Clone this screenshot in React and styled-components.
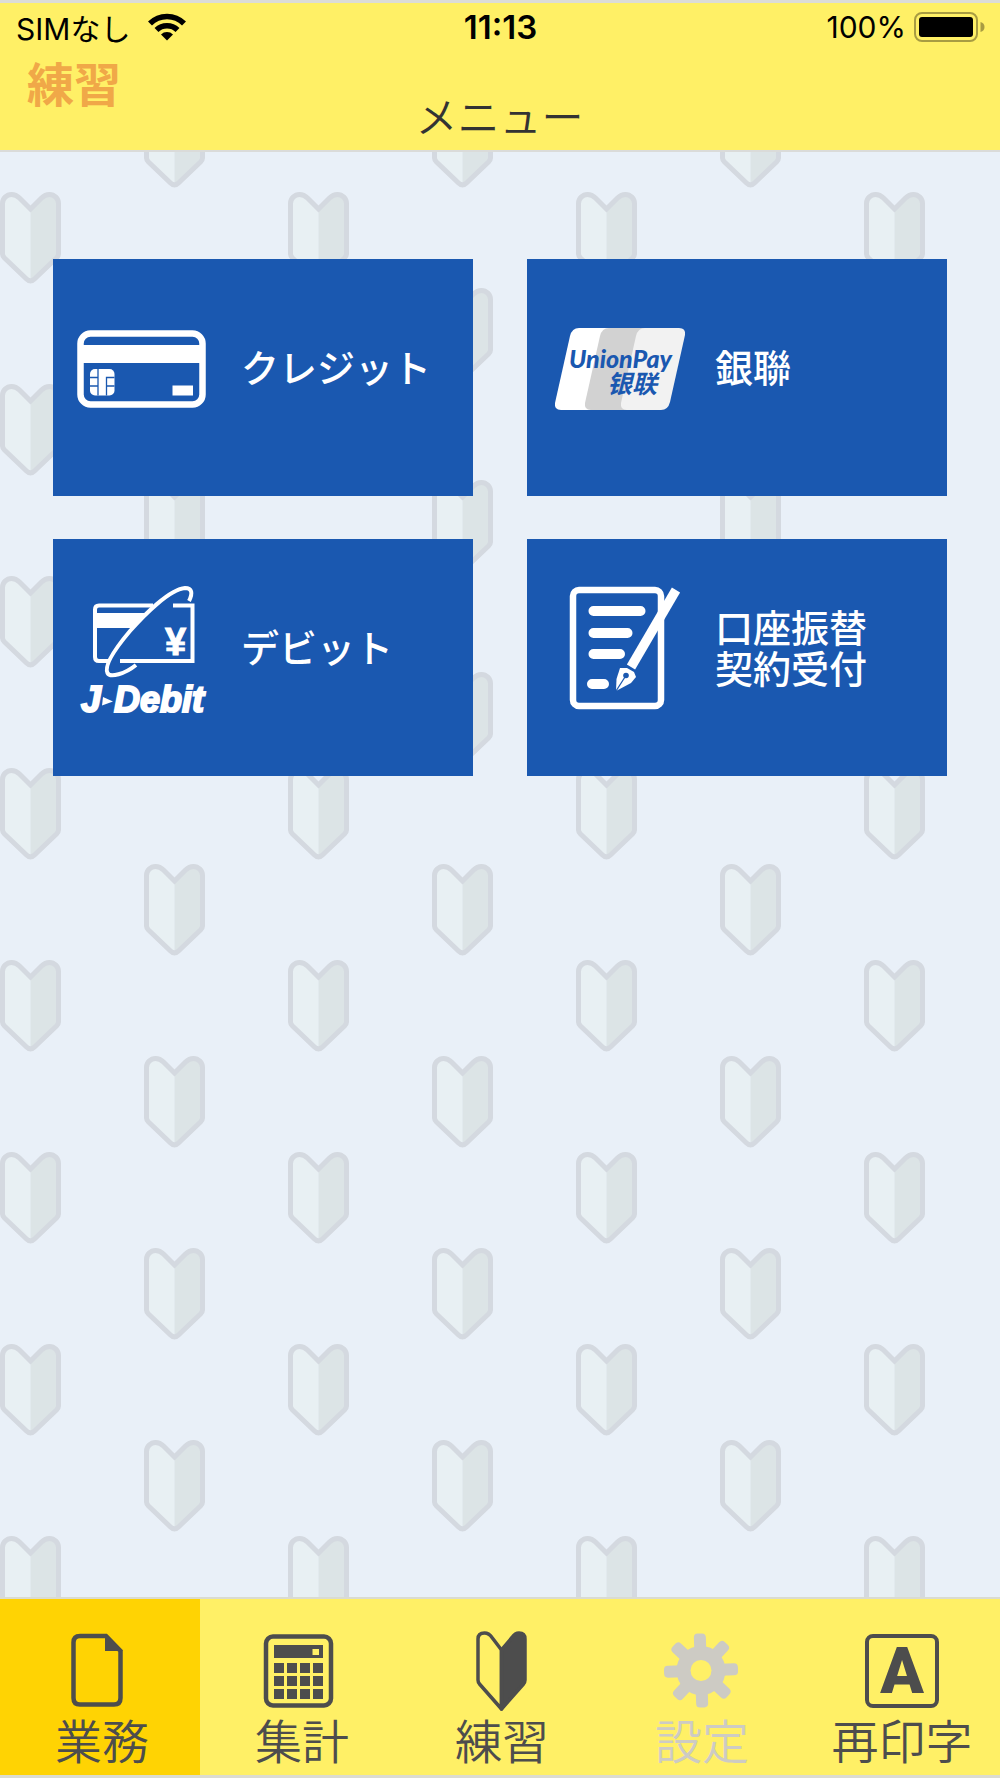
import React from "react";
import styled, { createGlobalStyle } from "styled-components";

const markTile = `<svg xmlns="http://www.w3.org/2000/svg" width="288" height="192">
<defs><g id="m">
<path d="M2.5 11.5a9 9 0 0 1 9-9q4.500 0 8 3.500L30.500 17V89q-2 0-4-2L4.500 66q-2-2-2-4Z" fill="#e8f0f3"/>
<path d="M58.500 11.500a9 9 0 0 0-9-9q-4.500 0-8 3.500L30.500 17V89q2 0 4-2L56.500 66q2-2 2-4Z" fill="#dce4e6"/>
<path d="M2.500 11.500a9 9 0 0 1 9-9q4.500 0 8 3.500L30.500 17L41.500 6q3.500-3.500 8-3.500a9 9 0 0 1 9 9V62q0 2-2 4L34.500 87q-4 4-8 0L4.500 66q-2-2-2-4Z" fill="none" stroke="#d4d9e0" stroke-width="5"/>
</g></defs>
<use href="#m"/><use href="#m" x="144" y="96"/><use href="#m" x="144" y="-96"/></svg>`;

const GlobalStyle = createGlobalStyle`
  * {
    box-sizing: border-box;
  }
  body {
    margin: 0;
    font-family: Inter, "Noto Sans CJK JP", sans-serif;
  }
  button {
    margin: 0;
    padding: 0;
    border: 0;
    font-family: inherit;
    cursor: pointer;
  }
`;

const Screen = styled.div`
  display: flex;
  flex-direction: column;
  min-height: 100vh;
  border-top: 3px solid #dcdcd8;
  border-bottom: 3px solid #dcdcd0;
`;

const Header = styled.header`
  background-color: #fff066;
  border-bottom: 2px solid #dadbd9;
`;

const StatusBar = styled.div`
  display: grid;
  grid-template-columns: 1fr auto 1fr;
  align-items: center;
  height: 48px;
  padding: 0 15px 0 16px;
  font-size: 30px;
  color: #000;
`;

const StatusGroup = styled.div`
  display: flex;
  align-items: center;
  justify-content: ${(props) => (props.$end ? "flex-end" : "flex-start")};
  gap: ${(props) => (props.$end ? "8px" : "18px")};
`;

const Clock = styled.span`
  font-size: 33px;
  font-weight: 600;
`;

const TitleBar = styled.div`
  display: grid;
  grid-template-columns: 1fr auto 1fr;
  height: 99px;
  padding: 6px 28px 6px 27px;
`;

const Mode = styled.span`
  font-size: 47px;
  font-weight: 700;
  line-height: 56px;
  color: #f0a848;
`;

const Title = styled.h1`
  align-self: end;
  margin: 0;
  font-size: 42px;
  font-weight: 350;
  line-height: 52px;
  color: #333;
`;

const Main = styled.main`
  flex: 1;
  padding: 107px 53px;
  background: #e9f0f8 url("data:image/svg+xml,${encodeURIComponent(markTile)}") 0 40px;
`;

const Menu = styled.div`
  display: grid;
  grid-template-columns: 1fr 1fr;
  gap: 43px 54px;
`;

const Tile = styled.button`
  display: flex;
  align-items: center;
  gap: 28px;
  min-height: 237px;
  padding: 0 24px 18px;
  background-color: #1a58b0;
  color: #fff;
  font-size: 38px;
  font-weight: 500;
  line-height: 41px;
  text-align: left;
  white-space: pre-line;
`;

const TileIcon = styled.svg`
  flex: none;
  width: 136px;
  height: 130px;
  overflow: visible;
`;

const TabBar = styled.nav`
  display: grid;
  grid-template-columns: repeat(5, 1fr);
  background-color: #fff066;
  border-top: 2px solid #dadbd0;
`;

const Tab = styled.button`
  display: flex;
  flex-direction: column;
  align-items: center;
  gap: 5px;
  padding: 34px 0 5px 4px;
  background-color: ${(props) => (props.$active ? "#ffd303" : "transparent")};
  color: #4d4d4d;
  font-size: 47px;
  font-weight: 350;
  line-height: 56px;
  white-space: nowrap;

  &:disabled {
    color: #cdcbc4;
    cursor: default;
  }
`;

const TabIcon = styled.svg`
  width: 76px;
  height: 76px;
  overflow: visible;
`;

function WifiIcon() {
  return (
    <svg width="38" height="28" viewBox="0 0 38 28">
      <g fill="none" stroke="#000" strokeWidth="5.6">
        <path d="M2 10.500a24 24 0 0 1 34 0" />
        <path d="M8.500 17a15 15 0 0 1 21 0" />
      </g>
      <path d="M19 27.500l-6-6a8.500 8.500 0 0 1 12 0z" />
    </svg>
  );
}

function BatteryIcon() {
  return (
    <svg width="71" height="30" viewBox="0 0 71 30">
      <rect x="1" y="1" width="62" height="28" rx="7" fill="none" stroke="#a89c42" strokeWidth="2" />
      <rect x="5" y="5" width="54" height="20" rx="3" />
      <path d="M66.500 10q4 1 4 5t-4 5z" fill="#a89c42" />
    </svg>
  );
}

function CreditIcon() {
  return (
    <TileIcon viewBox="0 0 136 130" fill="#fff">
      <rect x="3.500" y="29.500" width="122" height="71" rx="10" fill="none" stroke="#fff" strokeWidth="6.500" />
      <rect x="4" y="41" width="121" height="18" />
      <rect x="13" y="65" width="24.500" height="26.500" rx="5" />
      <path
        d="M21 65V91.500M13 73.500H21M13 82H21M29.500 91.500V73.500H37.500M29.500 82H37.500"
        fill="none"
        stroke="#1a58b0"
        strokeWidth="1.300"
      />
      <rect x="95.500" y="81.500" width="20.500" height="10" />
    </TileIcon>
  );
}

function UnionPayIcon() {
  return (
    <TileIcon viewBox="0 0 136 130">
      <path d="M28 24H70L54 106H10q-7 0-6-7L19 32q2-8 9-8z" fill="#fff" />
      <path d="M58 24H100L84 106H40q-7 0-6-7L49 32q2-8 9-8z" fill="#d2d2d2" />
      <path d="M94 24H128q7 0 6 7L119 98q-2 8-9 8H76q-7 0-6-7L85 32q2-8 9-8z" fill="#f2f2f2" />
      <g fill="#1a58b0" fontStyle="italic">
        <text x="18" y="64" fontFamily="Lato" fontSize="25" fontWeight="900">
          UnionPay
        </text>
        <text x="56" y="89" fontFamily="Noto Sans CJK SC" fontSize="25" fontWeight="700">
          银联
        </text>
      </g>
    </TileIcon>
  );
}

function DebitIcon() {
  return (
    <TileIcon viewBox="0 0 136 130" fill="#fff">
      <g fill="none" stroke="#fff" strokeWidth="4">
        <path d="M76 21.500H22q-4 0-4 4V73q0 4 4 4H32" />
        <path d="M96 21.500H115.500V77H43" />
        <path d="M112 17C116 9 115 4 108 4C93 5 67 31 53 47C37 66 27 82 30.500 89C33 94 48 90 59 81" />
      </g>
      <path d="M18 29H69L54 44H18z" />
      <text x="88" y="71" fontFamily="Liberation Sans" fontSize="38" fontWeight="700" stroke="#fff">
        ¥
      </text>
      <g fontFamily="Liberation Sans" fontSize="36" fontWeight="700" fontStyle="italic" stroke="#fff" strokeWidth="2">
        <text x="4" y="128">J</text>
        <text x="37" y="128">Debit</text>
      </g>
      <path d="M26 113L36 117.500L25 121.500z" />
    </TileIcon>
  );
}

function ContractIcon() {
  return (
    <TileIcon viewBox="0 0 136 130" fill="#fff">
      <rect x="22" y="6" width="88" height="116" rx="6" fill="none" stroke="#fff" strokeWidth="6.500" />
      <path
        d="M42.500 27H89.500M42.500 49H76.500M42.500 70H69M41 100H53"
        fill="none"
        stroke="#fff"
        strokeWidth="10"
        strokeLinecap="round"
      />
      <path d="M125 6L80 83" stroke="#fff" strokeWidth="9.500" />
      <path d="M69 84L76 84L83 88L85 93L80 99L65 107L65.500 95z" />
      <path d="M65 107L74 93" stroke="#1a58b0" strokeWidth="1.300" />
      <circle cx="75" cy="91.500" r="2.800" fill="#1a58b0" />
    </TileIcon>
  );
}

function FileIcon() {
  return (
    <TabIcon viewBox="2 0 76 76" fill="none" stroke="currentColor" strokeWidth="4.500">
      <path d="M44 3H18q-6.500 0-6.500 6.500V65q0 6.500 6.500 6.500H52q6.500 0 6.500-6.500V18z" />
      <path d="M43 1L61 18H43z" fill="currentColor" stroke="none" />
    </TabIcon>
  );
}

function CalculatorIcon() {
  return (
    <TabIcon viewBox="2 0 76 76" fill="currentColor">
      <rect x="4" y="3.500" width="65" height="69" rx="7" fill="none" stroke="currentColor" strokeWidth="4.500" />
      <path fillRule="evenodd" d="M12 12H61V25H12zM50.500 16V22H57V16z" />
      {[30, 43, 56].map((y) =>
        [12, 25, 38, 51].map((x) => <rect key={`${x}-${y}`} x={x} y={y} width="10" height="10" />)
      )}
    </TabIcon>
  );
}

function BeginnerIcon() {
  return (
    <TabIcon viewBox="2 0 76 76" fill="none" stroke="currentColor" strokeWidth="3.500" strokeLinejoin="round">
      <path d="M39.500 17L30 4.500Q27 0 22.500 0Q16 0 16 6V47q0 2 1.500 4L39.500 76z" />
      <path
        d="M39.500 17L50 4.500Q53 0 57 0Q63 0 63 6V47q0 2-1.500 4L39.500 76z"
        fill="currentColor"
      />
    </TabIcon>
  );
}

function GearIcon() {
  return (
    <TabIcon viewBox="2 0 76 76" fill="currentColor">
      <g transform="rotate(-2 39 37.500)">
        {[0, 45, 90, 135].map((angle) => (
          <rect
            key={angle}
            x="33"
            y="0.500"
            width="12"
            height="74"
            rx="4"
            transform={`rotate(${angle} 39 37.500)`}
          />
        ))}
      </g>
      <circle cx="39" cy="37.500" r="24.500" />
      <circle cx="39" cy="37.500" r="10.500" fill="#fff066" />
    </TabIcon>
  );
}

function ReprintIcon() {
  return (
    <TabIcon viewBox="2 0 76 76" fill="currentColor">
      <rect x="5" y="3" width="70" height="70" rx="6" fill="none" stroke="currentColor" strokeWidth="4" />
      <text x="40" y="60" textAnchor="middle" fontFamily="Roboto" fontSize="64" fontWeight="900">
        A
      </text>
    </TabIcon>
  );
}

const menuItems = [
  { id: "credit", label: "クレジット", icon: CreditIcon },
  { id: "unionpay", label: "銀聯", icon: UnionPayIcon },
  { id: "debit", label: "デビット", icon: DebitIcon },
  { id: "contract", label: "口座振替\n契約受付", icon: ContractIcon },
];

const tabs = [
  { id: "work", label: "業務", icon: FileIcon },
  { id: "total", label: "集計", icon: CalculatorIcon },
  { id: "practice", label: "練習", icon: BeginnerIcon },
  { id: "settings", label: "設定", icon: GearIcon, disabled: true },
  { id: "reprint", label: "再印字", icon: ReprintIcon },
];

function App() {
  const [active, setActive] = React.useState("work");

  return (
    <>
      <GlobalStyle />
      <Screen>
        <Header>
          <StatusBar>
            <StatusGroup>
              <span>SIMなし</span>
              <WifiIcon />
            </StatusGroup>
            <Clock>11:13</Clock>
            <StatusGroup $end>
              <span>100%</span>
              <BatteryIcon />
            </StatusGroup>
          </StatusBar>
          <TitleBar>
            <Mode>練習</Mode>
            <Title>メニュー</Title>
          </TitleBar>
        </Header>
        <Main>
          <Menu>
            {menuItems.map(({ id, label, icon: Icon }) => (
              <Tile key={id} type="button">
                <Icon />
                <span>{label}</span>
              </Tile>
            ))}
          </Menu>
        </Main>
        <TabBar>
          {tabs.map(({ id, label, icon: Icon, disabled }) => (
            <Tab
              key={id}
              type="button"
              $active={active === id}
              disabled={disabled}
              onClick={() => setActive(id)}
            >
              <Icon />
              <span>{label}</span>
            </Tab>
          ))}
        </TabBar>
      </Screen>
    </>
  );
}

export default App;
